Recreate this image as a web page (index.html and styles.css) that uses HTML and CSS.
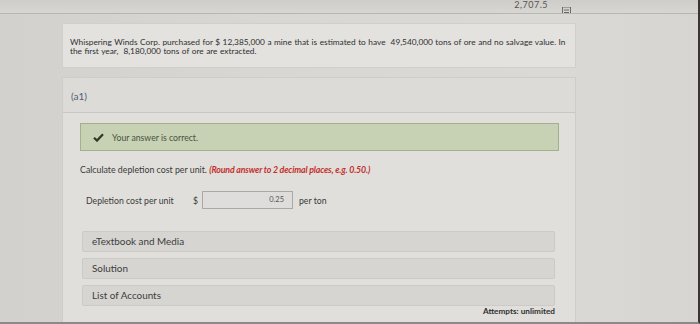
FILE: index.html
```html
<!DOCTYPE html>
<html>
<head>
<meta charset="utf-8">
<link rel="stylesheet" href="styles.css">
</head>
<body>
<div class="screen">
  <div class="topbar">
    <span class="score">2,707.5</span>
    <span class="menu-icon">
      <svg width="9" height="9" viewBox="0 0 9 9"><rect x="0.5" y="0" width="8" height="8.5" fill="none" stroke="#6a6a6a" stroke-width="1"/><line x1="2" y1="3" x2="7" y2="3" stroke="#6a6a6a"/><line x1="2" y1="5.5" x2="7" y2="5.5" stroke="#6a6a6a"/></svg>
    </span>
  </div>
  <div class="page">
    <div class="question">
      Whispering Winds Corp. purchased for $ 12,385,000 a mine that is estimated to have &nbsp;49,540,000 tons of ore and no salvage value. In<br>the first year, &nbsp;8,180,000 tons of ore are extracted.
    </div>
    <div class="part">
      <div class="part-head">(a1)</div>
      <div class="part-body">
        <div class="correct">
          <svg class="check" width="11" height="9" viewBox="0 0 11 9"><path d="M1 4.8 L4 7.6 L10 1.2" fill="none" stroke="#2e3a26" stroke-width="2.2"/></svg>
          <span>Your answer is correct.</span>
        </div>
        <div class="prompt">Calculate depletion cost per unit. <em class="hint">(Round answer to 2 decimal places, e.g. 0.50.)</em></div>
        <div class="answer-row">
          <span class="label">Depletion cost per unit</span>
          <span class="dollar">$</span>
          <span class="input">0.25</span>
          <span class="unit">per ton</span>
        </div>
        <div class="accordions">
          <div class="acc">eTextbook and Media</div>
          <div class="acc">Solution</div>
          <div class="acc">List of Accounts</div>
        </div>
        <div class="attempts">Attempts: unlimited</div>
      </div>
    </div>
  </div>
</div>
</body>
</html>
```
FILE: styles.css
```css
* { box-sizing: border-box; }
html, body { margin: 0; padding: 0; }
body {
  width: 700px;
  height: 324px;
  overflow: hidden;
  font-family: Lato, "Open Sans", sans-serif;
  color: #3a3a3a;
  background: #d7d5d1;
}
.screen {
  width: 700px;
  height: 324px;
  background: linear-gradient(90deg, #d3d1cd 0%, #d8d7d3 40%, #dad9d6 80%, #d6d5d2 100%);
  border-right: 2px solid #3a3532;
  border-bottom: 2px solid #8c8a86;
  overflow: hidden;
}
.topbar {
  height: 14px;
  border-bottom: 1px solid #b8b6b1;
  background: linear-gradient(180deg, #cfcdc9 0%, #d8d6d2 100%);
  display: flex;
  justify-content: flex-end;
  align-items: flex-start;
  padding-right: 127px;
  gap: 14px;
  overflow: hidden;
}
.score {
  font-size: 9px;
  line-height: 9px;
  color: #555;
  letter-spacing: 0.5px;
}
.menu-icon { display: block; height: 9px; }
.page {
  padding: 9px 122px 0 62px;
}
.question {
  background: #e3e2df;
  border: 1px solid #d0cfcb;
  padding: 14px 4px 11px 7px;
  font-size: 8.3px;
  line-height: 9px;
  color: #2f2f2f;
  word-spacing: 0.4px;
  white-space: nowrap;
}
.part {
  margin-top: 9px;
  border: 1px solid #cfcdc9;
  background: #e0dfdc;
  height: 260px;
}
.part-head {
  height: 35px;
  background: #dcdbd7;
  border-bottom: 1px solid #c9c8c4;
  padding: 12px 0 0 8px;
  font-size: 10px;
  line-height: 12px;
  color: #4f6178;
}
.part-body {
  padding: 10px 16px 0 17px;
}
.correct {
  height: 28px;
  background: #c7d1b3;
  border: 1px solid #a3af8e;
  display: flex;
  align-items: center;
  padding-left: 12px;
  gap: 8px;
  font-size: 8.7px;
  color: #4a5142;
}
.check { display: block; }
.prompt {
  margin-top: 13px;
  font-size: 8.8px;
  line-height: 11px;
  color: #3a3a3a;
}
.hint {
  color: #c4302b;
  font-weight: bold;
  letter-spacing: -0.15px;
}
.answer-row {
  margin-top: 16px;
  display: flex;
  align-items: center;
  padding-left: 6px;
  font-size: 8.7px;
  color: #3a3a3a;
}
.label { width: 107px; }
.dollar { width: 9px; }
.input {
  width: 91px;
  height: 18px;
  border: 1px solid #a9a8a4;
  background: #dedddb;
  text-align: right;
  padding-right: 8px;
  line-height: 16px;
  font-size: 7.5px;
  color: #555;
}
.unit { margin-left: 6px; }
.accordions {
  margin-top: 22px;
  margin-left: 2px;
  margin-right: 4px;
  display: flex;
  flex-direction: column;
  gap: 6px;
}
.acc {
  height: 21px;
  background: #d6d5d2;
  border: 1px solid #cbcac6;
  border-radius: 2px;
  padding-left: 9px;
  font-size: 9.9px;
  line-height: 19px;
  color: #3c3c3c;
}
.attempts {
  margin-top: 0;
  text-align: right;
  margin-right: 4px;
  font-size: 8.2px;
  font-weight: bold;
  line-height: 10px;
  color: #2f2f2f;
}
```
